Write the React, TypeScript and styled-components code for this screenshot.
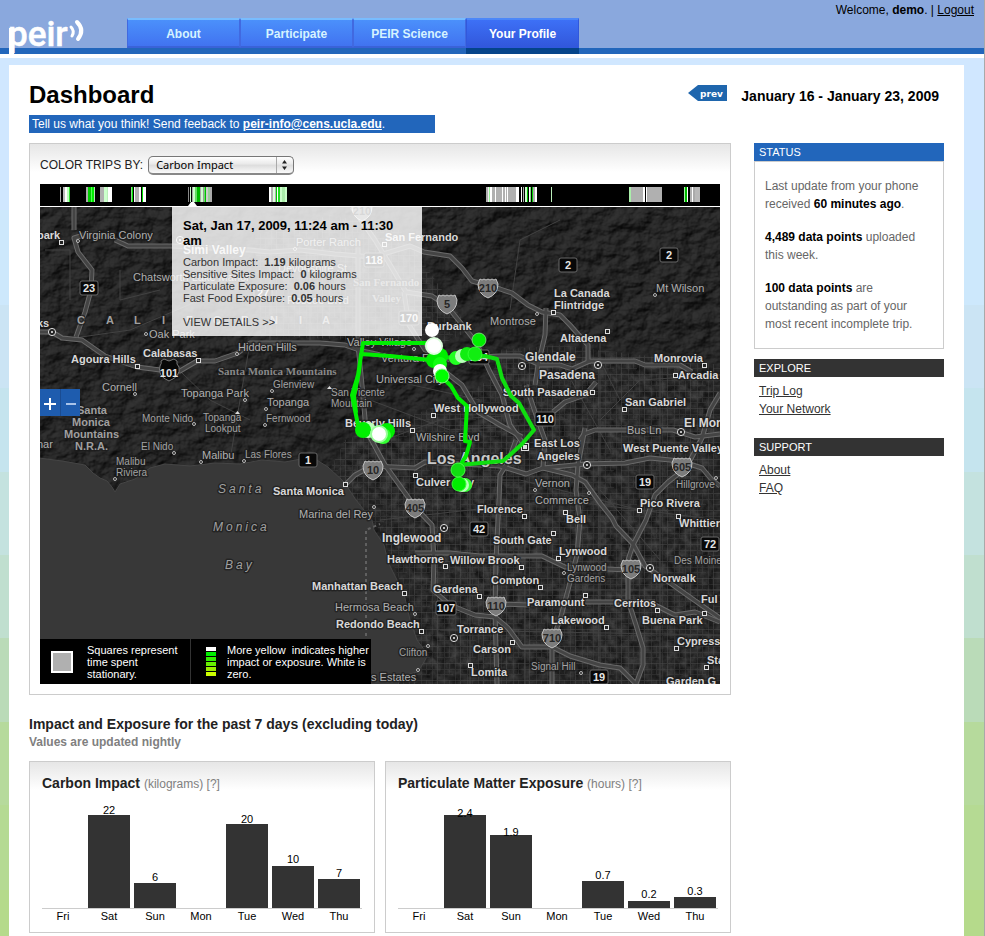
import React from "react";
import styled, { createGlobalStyle, css } from "styled-components";

const GlobalStyle = createGlobalStyle`
  * { box-sizing: border-box; }
  body {
    margin: 0;
    font-family: "Liberation Sans", Arial, sans-serif;
    font-size: 12px;
    line-height: 18px;
    color: #222;
  }
  h1, h2, h3, p, ul { margin: 0; padding: 0; }
  ul { list-style: none; }
`;

/* ---------- page frame ---------- */

const Page = styled.div`
  display: flex;
  flex-direction: column;
  min-height: 100vh;
  border-right: 1px solid #a9a9a9;
  background: linear-gradient(
    #d0e7ff 0 210px, #cde8fc 210px 305px, #cbe4f4 305px 388px, #c5e4ee 388px 472px,
    #c4e2df 472px 555px, #c0dfcf 555px 638px, #badbb8 638px 722px, #b6da9c 722px 805px,
    #b5da93 805px 890px, #b5da8b 890px
  );
`;

const Header = styled.header`
  display: flex;
  justify-content: space-between;
  height: 58px;
  padding-left: 9px;
  background: linear-gradient(#8aa8dd 0 48px, #2266bb 48px 54px, #fff 54px);
`;

const Brand = styled.div`
  display: flex;
  align-items: flex-start;
  gap: 38px;
  padding-top: 18px;
`;

const Logo = styled.a`
  display: block;
  width: 80px;
  height: 36px;
`;

const Nav = styled.nav`
  display: flex;
`;

const NavLink = styled.a<{ $active?: boolean }>`
  width: 113px;
  height: 30px;
  border: 1px solid #4169e0;
  border-top: 2px solid #78bcff;
  border-bottom: 2px solid #3a62d8;
  background: linear-gradient(#4b90fb, #4173f0);
  color: #d6f3ff;
  font-size: 12px;
  font-weight: bold;
  line-height: 28px;
  text-align: center;
  text-decoration: none;
  ${(p) =>
    p.$active &&
    css`
      border-color: #3158dc;
      border-top-color: #4c87f8;
      background: linear-gradient(#3d70f6, #3258dc);
      box-shadow: 0 6px 0 #04448a;
      color: #fff;
    `}
`;

const Welcome = styled.div`
  padding: 1px 10px 0 0;
  color: #000;
  a { color: #000; }
`;

const Content = styled.div`
  flex: 1;
  margin: 7px 20px 0 9px;
  padding: 16px 20px 3px;
  background: #fff;
`;

const TitleRow = styled.div`
  display: flex;
  justify-content: space-between;
  align-items: center;
  height: 28px;
`;

const Title = styled.h1`
  color: #000;
  font-size: 24px;
  line-height: 28px;
`;

const Period = styled.div`
  display: flex;
  align-items: flex-start;
  gap: 14px;
  padding: 2px 5px 0 0;
  color: #000;
  font-size: 14px;
  font-weight: bold;
`;

const PrevLink = styled.a`
  display: block;
  height: 16px;
  margin-top: -2px;
`;

const Feedback = styled.p`
  max-width: 406px;
  margin: 6px 0 10px;
  padding-left: 3px;
  background: #2266bb;
  color: #fff;
  a { color: #fff; font-weight: bold; }
`;

const Columns = styled.div`
  display: grid;
  grid-template-columns: minmax(0, 1fr) 190px;
  gap: 23px;
  align-items: start;
`;

const Panel = styled.section`
  border: 1px solid #ccc;
  background: linear-gradient(#e6e6e6, #fff 28px);
`;

/* ---------- map panel ---------- */

const MapPanel = styled(Panel)`
  padding: 11px 10px 10px;
`;

const ColorForm = styled.form`
  display: flex;
  align-items: center;
  gap: 5px;
  height: 20px;
  margin-bottom: 9px;
  label { font-size: 12px; color: #222; }
`;

const SelectBox = styled.span`
  position: relative;
  display: block;
  svg { position: absolute; right: 0; top: 0; pointer-events: none; }
`;

const Select = styled.select`
  appearance: none;
  display: block;
  width: 146px;
  height: 19px;
  padding: 0 20px 0 7px;
  border: 1px solid #777;
  border-bottom: 2px solid #888;
  border-radius: 5px;
  background: linear-gradient(#fff, #e9e9e9 45%, #dcdcdc 50%, #fafafa);
  color: #000;
  font-family: "Noto Sans", "Open Sans", sans-serif;
  font-size: 11px;
  line-height: 14px;
`;

const Timeline = styled.svg`
  display: block;
  width: 100%;
  height: 23px;
  background: #000;
  border-bottom: 1px solid #fff;
`;

const MapFrame = styled.div`
  position: relative;
  height: 477px;
  overflow: hidden;
  background: #383838;
`;

const MapSvg = styled.svg`
  display: block;
  width: 100%;
  height: 100%;
  font-family: "Liberation Sans", Arial, sans-serif;
`;

type Kind = "city" | "town" | "major" | "metro" | "range" | "park" | "water" | "small";

const kinds = {
  city: css`font-size: 11px; font-weight: bold; fill: #d8d8d8;`,
  town: css`font-size: 11px; fill: #b0b0b0;`,
  small: css`font-size: 10px; fill: #a2a2a2;`,
  major: css`font-size: 12px; font-weight: bold; fill: #d8d8d8;`,
  metro: css`font-size: 16px; font-weight: bold; fill: #c8c8c8;`,
  park: css`font-size: 11px; font-weight: bold; fill: #a0a0a0;`,
  range: css`font-size: 11px; font-weight: bold; fill: #888; font-family: "Liberation Serif", serif;`,
  water: css`font-size: 12px; font-style: italic; fill: #a0a0a0; letter-spacing: 3px;`,
};

const MapLabel = styled.text<{ $kind: Kind }>`
  ${(p) => kinds[p.$kind]}
  paint-order: stroke;
  stroke: #1c1c1c;
  stroke-opacity: 0.7;
  stroke-width: 3px;
  stroke-linejoin: round;
`;

const ShieldText = styled.text<{ $dark?: boolean }>`
  font-size: 11px;
  font-weight: bold;
  text-anchor: middle;
  fill: ${(p) => (p.$dark ? "#262626" : "#e4e4e4")};
`;

const Tooltip = styled.div`
  position: absolute;
  left: 132px;
  top: 0;
  width: 250px;
  height: 129px;
  padding: 11px;
  background: rgba(255, 255, 255, 0.82);
  color: #333;
  font-size: 11px;
  line-height: 12px;
  h3 {
    margin-bottom: 8px;
    color: #000;
    font-size: 13px;
    line-height: 15px;
  }
  a {
    display: inline-block;
    margin-top: 12px;
    color: #333;
    text-decoration: none;
  }
`;

const ZoomControl = styled.div`
  position: absolute;
  left: 0;
  top: 182px;
  display: flex;
`;

const ZoomButton = styled.button`
  display: flex;
  align-items: center;
  justify-content: center;
  width: 20px;
  height: 27px;
  padding: 3px 0 0;
  border: 0;
  background: #1e5cae;
  & + & { border-left: 1px solid #1a4c92; }
`;

const Legend = styled.div`
  position: absolute;
  left: 0;
  bottom: 0;
  display: flex;
  height: 45px;
  background: #000;
  color: #fff;
  font-size: 11px;
  line-height: 12px;
`;

const LegendItem = styled.div<{ $wide?: boolean }>`
  display: flex;
  align-items: center;
  gap: ${(p) => (p.$wide ? "11px" : "14px")};
  width: ${(p) => (p.$wide ? "181px" : "150px")};
  padding-left: ${(p) => (p.$wide ? "15px" : "11px")};
  border-left: ${(p) => (p.$wide ? "1px solid #333" : "0")};
  svg { flex: none; }
`;

/* ---------- charts ---------- */

const SectionTitle = styled.h2`
  margin-top: 20px;
  font-size: 14px;
  line-height: 18px;
`;

const SectionNote = styled.p`
  margin-bottom: 10px;
  color: #808080;
  font-weight: bold;
`;

const Charts = styled.div`
  display: grid;
  grid-template-columns: 1fr 1fr;
  gap: 10px;
`;

const ChartPanel = styled(Panel)`
  padding: 11px 12px 8px;
`;

const ChartTitle = styled.h3`
  font-size: 14px;
  line-height: 20px;
  small { color: #808080; font-size: 12px; font-weight: normal; }
  a { color: #808080; text-decoration: none; }
`;

const Plot = styled.div`
  display: grid;
  grid-template-columns: repeat(7, 1fr);
  column-gap: 4px;
  align-items: end;
  height: 115px;
  padding-right: 2px;
  border-bottom: 1px solid #ccc;
`;

const Bar = styled.div`
  position: relative;
  background: #333;
`;

const BarValue = styled.span`
  position: absolute;
  left: 0;
  right: 0;
  color: #000;
  font-size: 11px;
  line-height: 12px;
  text-align: center;
`;

const Days = styled.div`
  display: grid;
  grid-template-columns: repeat(7, 1fr);
  column-gap: 4px;
  padding-right: 2px;
  color: #000;
  font-size: 11px;
  line-height: 15px;
  text-align: center;
`;

/* ---------- sidebar ---------- */

const SideTitle = styled.h2<{ $blue?: boolean }>`
  padding-left: 5px;
  background: ${(p) => (p.$blue ? "#2266bb" : "#333")};
  color: #fff;
  font-size: 11px;
  font-weight: normal;
  line-height: 18px;
`;

const StatusBox = styled.div`
  display: grid;
  gap: 15px;
  margin-bottom: 10px;
  padding: 15px 10px;
  border: 1px solid #ccc;
  color: #666;
  strong { color: #000; }
`;

const SideLinks = styled.ul`
  padding: 5px 5px 20px;
  a { color: #333; }
`;

/* ---------- data ---------- */

const trips: [number, number, string][] = [
  [60, 1, "#aaa"], [63, 2, "#bbb"], [65, 2, "#fff"], [67, 2, "#bfb"], [69, 1, "#3d3"],
  [86, 2, "#aaa"], [88, 3, "#0c0"], [91, 1, "#5f5"], [92, 2, "#0e0"], [94, 1, "#bdb"],
  [100, 4, "#b0b0b0"], [104, 3, "#cfc"], [107, 1, "#beb"], [108, 4, "#fff"],
  [131, 1, "#8d8"], [132, 1, "#0d0"], [134, 1, "#fff"], [135, 4, "#b0b0b0"], [139, 2, "#fff"], [142, 1, "#0d0"], [143, 3, "#fff"],
  [188, 1, "#888"], [190, 1, "#cfc"], [192, 1, "#aaa"], [193, 2, "#cfc"], [195, 2, "#6d6"], [197, 3, "#0b0"], [200, 1, "#aaa"], [201, 2, "#cfc"], [203, 1, "#999"], [204, 1, "#6d6"], [205, 1, "#0b0"], [206, 2, "#ccc"], [208, 2, "#9c9"], [210, 2, "#aaa"],
  [269, 2, "#fff"], [271, 2, "#b0b0b0"], [273, 2, "#dfd"], [275, 1, "#b0b0b0"], [276, 1, "#0c0"], [277, 1, "#fff"], [278, 2, "#2d2"], [280, 2, "#cfc"], [282, 3, "#aea"], [285, 2, "#cfc"],
  [486, 2, "#b0b0b0"], [488, 1, "#eee"], [489, 1, "#9e9"], [490, 2, "#fff"], [492, 3, "#b0b0b0"], [495, 1, "#fff"], [496, 6, "#b0b0b0"], [502, 1, "#fff"], [503, 2, "#b0b0b0"], [505, 1, "#fff"], [506, 1, "#b0b0b0"], [507, 1, "#fff"], [508, 8, "#b0b0b0"], [516, 3, "#fff"], [521, 1, "#fff"], [523, 1, "#aaa"], [525, 2, "#cfc"], [527, 1, "#0b0"], [529, 1, "#fff"], [530, 1, "#8d8"], [532, 1, "#0c0"], [533, 2, "#aaa"], [535, 2, "#fff"],
  [551, 1, "#beb"],
  [629, 2, "#aea"], [631, 12, "#b0b0b0"], [643, 2, "#fff"], [646, 1, "#fff"], [647, 1, "#aaa"], [648, 14, "#b0b0b0"],
  [684, 1, "#aea"], [685, 2, "#0b0"], [687, 1, "#fff"], [690, 2, "#b0b0b0"], [692, 1, "#fff"], [693, 2, "#aaa"], [695, 5, "#b8b8b8"],
];

const roads = [
  "M74 207 V230 M84 235 L74 238 L78 252 L92 270 L91 290 L85 312 L76 337",
  "M40 332 H52 L62 338 L82 340 L105 356 L137 367 L168 371 H180 L197 361 H215 L238 353 L250 343 H290 L320 343 L345 345 L362 351 L390 357 L430 360 L462 385 L478 412 L500 425 L522 437",
  "M115 240 L128 246 H172 L250 250 L270 252 L300 250 L335 254 L373 257 L410 246 L424 252 L450 256 L462 268 L472 281 L500 289 L512 293 L528 305 L542 312 L560 315 L570 325 L577 333 L588 345 V361 L635 361 L645 365 H680 L692 372",
  "M352 207 L375 240 L392 268 L406 292 L432 296 L447 306 L460 322 L476 342 L490 372 L502 395 L510 425 L522 442",
  "M358 240 V345 L362 385 L366 430 L385 465 L408 497 L416 508 L432 525 L434 560 L433 590 L450 605 L475 615 L495 617 L508 628 L522 647 H552 L570 656 L600 665 L620 668 L636 684",
  "M345 485 L355 475 L372 466 L415 468 L425 462 L460 464 L500 466 L526 474 L543 468 L572 475 L585 482 L600 503 L612 518 L616 526 L633 544 L645 566 L670 583 L704 607 L720 618",
  "M543 468 L585 464 L625 463 L650 458 L680 461 L702 468 L712 480 L720 486",
  "M580 440 L584 434 L595 430 H673 L695 437 L720 434",
  "M478 357 L500 356 H520 L540 365 L560 365 L572 369 L590 361",
  "M546 308 L545 335 L538 365 L535 385",
  "M526 385 L536 415 L545 440 L543 468",
  "M553 412 L565 402 L585 395 L596 382",
  "M516 440 L508 462 L500 475 L499 500 L496 560 L495 612 L497 684",
  "M720 393 L710 410 L702 438 L686 468 L668 482 L655 495 L646 520 L633 545 L628 560 V600 L636 625 L643 648 V665 L636 684",
  "M585 428 L578 465 L576 490 L580 520 L577 555 L568 590 L560 620 L552 640 V684",
  "M496 604 L530 605 M585 602 H655 M655 605 L675 615 L695 612 L720 622",
  "M415 553 H450 L480 556 L520 556 H542 L565 567 L628 570",
  "M404 292 L409 325 L425 350 L450 360",
];

const minorRoads =
  "M370 400 L450 430 L530 425 M370 445 L440 420 L520 415 M380 520 L560 500 L720 520 M440 590 L720 590 M440 630 L720 635 M450 480 L520 480 L640 510 M600 340 V684 M660 360 V684 M470 450 V684 M525 480 V684 M560 360 L610 450 M600 490 L660 560 M600 420 L640 380 L720 375 M390 380 L480 400 M120 270 V300 L160 290 M45 250 H70 V300 M270 250 V340 M310 250 V340 M390 250 V340 M60 340 L130 330 L200 300 M180 371 L210 400 L250 420 M250 343 L240 400 L230 460 M510 310 L520 240 L560 220 M620 400 L600 360";

const urbanArea =
  "M345 440 L440 405 L490 380 L500 350 L560 345 L720 365 V684 H400 L415 620 L380 530 L330 470 Z M255 235 L330 215 L400 230 L470 330 L440 345 L260 335 Z";

const labels: [number, number, string, Kind][] = [
  [37, 239, "park", "city"], [79, 239, "Virginia Colony", "town"], [183, 254, "Simi Valley", "major"],
  [296, 246, "Porter Ranch", "town"], [385, 241, "San Fernando", "city"], [133, 281, "Chatsworth Lake Manor", "town"],
  [278, 272, "Devonshire St", "town"], [287, 304, "Roscoe Blvd", "town"], [353, 286, "San Fernando", "range"],
  [372, 302, "Valley", "range"], [554, 297, "La Canada", "city"], [554, 309, "Flintridge", "city"],
  [656, 292, "Mt Wilson", "town"], [490, 325, "Montrose", "town"], [560, 342, "Altadena", "city"],
  [149, 338, "Oak Park", "town"], [37, 327, "ks", "city"], [71, 363, "Agoura Hills", "city"],
  [143, 357, "Calabasas", "city"], [238, 351, "Hidden Hills", "town"], [218, 375, "Santa Monica Mountains", "range"],
  [427, 330, "Burbank", "city"], [347, 346, "Valley Village", "town"], [381, 362, "Ventura Fwy", "town"],
  [376, 383, "Universal City", "town"], [525, 361, "Glendale", "major"], [539, 379, "Pasadena", "major"],
  [503, 396, "South Pasadena", "city"], [654, 362, "Monrovia", "city"], [678, 379, "Arcadia", "city"],
  [625, 406, "San Gabriel", "city"], [684, 427, "El Monte", "major"], [627, 434, "Bus Ln", "town"],
  [102, 391, "Cornell", "town"], [181, 397, "Topanga Park", "town"], [273, 388, "Glenview", "small"],
  [331, 396, "San Vicente", "small"], [331, 407, "Mountain", "small"], [267, 406, "Topanga", "town"],
  [266, 422, "Fernwood", "small"], [142, 422, "Monte Nido", "small"], [203, 421, "Topanga", "small"],
  [205, 432, "Lookput", "small"], [77, 414, "Santa", "park"], [72, 426, "Monica", "park"],
  [64, 438, "Mountains", "park"], [75, 450, "N.R.A.", "park"], [141, 450, "El Nido", "small"],
  [37, 448, "nar", "town"], [116, 465, "Malibu", "small"], [116, 476, "Riviera", "small"],
  [202, 459, "Malibu", "town"], [245, 458, "Las Flores", "small"], [345, 427, "Beverly Hills", "city"],
  [434, 412, "West Hollywood", "city"], [416, 441, "Wilshire Blvd", "town"], [427, 464, "Los Angeles", "metro"],
  [534, 447, "East Los", "city"], [537, 460, "Angeles", "city"], [623, 452, "West Puente Valley", "city"],
  [416, 486, "Culver City", "city"], [273, 495, "Santa Monica", "city"], [299, 518, "Marina del Rey", "town"],
  [535, 487, "Vernon", "town"], [535, 504, "Commerce", "town"], [676, 488, "Hillgrove", "small"],
  [640, 507, "Pico Rivera", "city"], [477, 513, "Florence", "city"], [566, 523, "Bell", "city"],
  [679, 527, "Whittier", "city"], [382, 542, "Inglewood", "major"], [493, 544, "South Gate", "city"],
  [387, 563, "Hawthorne", "city"], [450, 564, "Willow Brook", "city"], [559, 555, "Lynwood", "city"],
  [567, 571, "Lynwood", "small"], [567, 582, "Gardens", "small"], [674, 564, "Des Moines", "small"],
  [491, 584, "Compton", "city"], [653, 582, "Norwalk", "city"], [312, 590, "Manhattan Beach", "city"],
  [433, 593, "Gardena", "city"], [527, 606, "Paramount", "city"], [614, 607, "Cerritos", "city"],
  [701, 603, "Ful", "city"], [335, 611, "Hermosa Beach", "town"], [336, 628, "Redondo Beach", "city"],
  [551, 624, "Lakewood", "city"], [642, 624, "Buena Park", "city"], [457, 633, "Torrance", "city"],
  [473, 653, "Carson", "city"], [399, 656, "Clifton", "small"], [677, 645, "Cypress", "city"],
  [531, 670, "Signal Hill", "small"], [707, 664, "Sta", "city"], [471, 676, "Lomita", "city"],
  [371, 681, "s Estates", "town"], [666, 685, "Garden G", "city"],
  [218, 493, "Santa", "water"], [213, 531, "Monica", "water"], [225, 569, "Bay", "water"],
  [77, 324, "C", "park"], [106, 324, "A", "park"], [134, 324, "L", "park"], [162, 324, "I", "park"],
  [186, 324, "F", "park"], [213, 324, "O", "park"], [241, 324, "R", "park"], [270, 324, "N", "park"],
  [299, 324, "I", "park"], [322, 324, "A", "park"],
];

const squares = [
  [61, 242], [137, 366], [198, 360], [384, 244], [553, 312], [607, 331], [704, 365], [675, 375], [592, 392], [624, 409],
  [433, 415], [412, 430], [415, 475], [345, 484], [524, 516], [565, 512], [639, 510], [678, 516], [553, 533], [521, 567],
  [445, 566], [558, 558], [540, 587], [404, 593], [479, 596], [585, 595], [657, 610], [606, 627], [704, 613], [421, 631],
  [512, 642], [470, 665], [676, 648], [706, 667],
];
const targets = [[52, 332], [180, 240], [522, 366], [598, 365], [681, 432], [587, 465], [444, 528], [650, 568], [454, 638]];
const dots = [
  [78, 241], [295, 249], [146, 334], [237, 354], [135, 394], [245, 400], [266, 409], [265, 425], [194, 424], [174, 453],
  [115, 479], [201, 462], [244, 461], [272, 391], [537, 314], [655, 295], [414, 349], [374, 507], [535, 490], [589, 493],
  [564, 573], [716, 478], [415, 614], [428, 646], [418, 670], [581, 673],
];
const interstates: [number, number, string][] = [
  [362, 211, "210"], [488, 288, "210"], [447, 304, "5"], [373, 470, "10"], [415, 508, "405"], [682, 467, "605"],
  [631, 569, "105"], [496, 606, "110"], [552, 638, "710"],
];
const routes: [number, number, string][] = [
  [89, 288, "23"], [568, 265, "2"], [669, 255, "2"], [374, 260, "118"], [409, 318, "170"], [263, 293, "27"],
  [545, 419, "110"], [308, 460, "1"], [645, 482, "19"], [479, 529, "42"], [710, 544, "72"], [446, 608, "107"],
  [599, 677, "19"], [479, 357, "134"],
];

const carbon = [
  { day: "Fri", value: "", height: 0, lift: 0 }, { day: "Sat", value: "22", height: 93, lift: -1 },
  { day: "Sun", value: "6", height: 25, lift: 0 }, { day: "Mon", value: "", height: 0, lift: 0 },
  { day: "Tue", value: "20", height: 84, lift: -1 }, { day: "Wed", value: "10", height: 42, lift: 1 },
  { day: "Thu", value: "7", height: 29, lift: 0 },
];
const particulate = [
  { day: "Fri", value: "", height: 0, lift: 0 }, { day: "Sat", value: "2.4", height: 93, lift: -4 },
  { day: "Sun", value: "1.9", height: 73, lift: -3 }, { day: "Mon", value: "", height: 0, lift: 0 },
  { day: "Tue", value: "0.7", height: 27, lift: 0 }, { day: "Wed", value: "0.2", height: 7, lift: 1 },
  { day: "Thu", value: "0.3", height: 11, lift: 0 },
];

/* ---------- pieces ---------- */

function PeirLogo() {
  return (
    <svg width="80" height="36" viewBox="0 0 80 36" overflow="visible" aria-label="peir">
      <text x="-1" y="28" fill="#fff" stroke="#fff" strokeWidth=".5" fontFamily="Roboto, sans-serif" fontWeight="500" fontSize="35">peir</text>
      <path d="M0 10h5v26H0z" fill="#fff" />
      <g fill="none" stroke="#fff" strokeLinecap="round">
        <path d="M62 9q4 4 1 9" strokeWidth="3" />
        <path d="M68 4Q76 12 69 21" strokeWidth="4" />
      </g>
    </svg>
  );
}

function TripMap() {
  return (
    <MapSvg viewBox="40 207 680 477" preserveAspectRatio="xMinYMin slice" aria-label="Map of trips around Los Angeles">
      <defs>
        <filter id="terrain" x="0" y="0" width="100%" height="100%" colorInterpolationFilters="sRGB">
          <feTurbulence type="fractalNoise" baseFrequency="0.05 0.07" numOctaves="5" seed="7" />
          <feDiffuseLighting surfaceScale="5" lightingColor="#fff" diffuseConstant="1">
            <feDistantLight azimuth="225" elevation="45" />
          </feDiffuseLighting>
          <feColorMatrix values="0.17 0 0 0 0.03  0.17 0 0 0 0.03  0.17 0 0 0 0.03  0 0 0 0 1" />
        </filter>
        <filter id="grain" x="0" y="0" width="100%" height="100%" colorInterpolationFilters="sRGB">
          <feGaussianBlur in="SourceGraphic" stdDeviation="9" result="soft" />
          <feTurbulence type="fractalNoise" baseFrequency="0.12" numOctaves="4" seed="3" />
          <feColorMatrix values="0.26 0 0 0 0.03  0.26 0 0 0 0.03  0.26 0 0 0 0.03  0 0 0 0 1" />
          <feComposite in2="soft" operator="in" />
        </filter>
        <pattern id="streets" width="23" height="17" patternUnits="userSpaceOnUse">
          <path d="M0 .5H23M.5 0V17" stroke="#555" opacity=".4" />
          <path d="M0 6.500H23M0 11.500H16M7.500 0V17M12.500 0V11M18.500 0V17" stroke="#484848" opacity=".35" />
        </pattern>
      </defs>
      <rect x="40" y="207" width="680" height="477" filter="url(#terrain)" />
      <path filter="url(#grain)" fill="#2c2c2c" d={urbanArea} />
      <path fill="url(#streets)" d={urbanArea} />
      <path
        fill="#383838" stroke="#454545"
        d="M39 458 L62 461 L85 465 L93 473 L100 478 L107 481 L112 487 L115 492 L120 484 L135 479 L150 468 L165 464 L190 466 L215 463 L240 464 L262 460 L285 462 L312 457 L328 467 L344 482 L356 500 L372 520 L374 530 L384 545 L388 562 L398 582 L405 598 L410 620 L417 640 L428 655 L418 672 L400 676 L398 686 L39 686 Z"
      />
      <path d="M366 642 V530 L380 524" fill="none" stroke="#606060" strokeWidth="2" strokeDasharray="3 3" />
      <path d={minorRoads} fill="none" stroke="#424242" />
      <g fill="none" strokeLinejoin="round">
        {roads.map((d) => <path key={d} d={d} stroke="#6a6a6a" strokeWidth="5" />)}
        {roads.map((d) => <path key={d} d={d} stroke="#444" strokeWidth="3" />)}
      </g>
      {routes.map(([x, y, n]) => (
        <g key={`${x}-${y}`}>
          <rect x={x - (n.length > 2 ? 10 : 9)} y={y - 7} width={n.length > 2 ? 20 : 18} height="14" rx="2" fill="#080808" stroke="#666" />
          <ShieldText x={x} y={y + 4}>{n}</ShieldText>
        </g>
      ))}
      <path d="M160 366q2-3 1-5l3-2 5 2 5-2 3 2q-1 3 2 6 2 9-10 14-12-5-9-15z" fill="#080808" stroke="#777" />
      <ShieldText x="169" y="377">101</ShieldText>
      {interstates.map(([x, y, n]) => (
        <g key={`${x}-${y}`}>
          <path
            transform={`translate(${x} ${y})`}
            d="M-8-9 Q-6-7-4-9 Q-2-7 0-9 Q2-7 4-9 Q6-7 8-9 L10-4 Q10 6 0 10 Q-10 6-10-4 Z"
            fill="#7c7c7c" stroke="#c4c4c4"
          />
          <ShieldText $dark x={x} y={y + 4}>{n}</ShieldText>
        </g>
      ))}
      {labels.map(([x, y, t, k]) => <MapLabel key={`${t}-${x}-${y}`} x={x} y={y} $kind={k}>{t}</MapLabel>)}
      <g fill="#222" stroke="#ddd">
        {squares.map(([x, y]) => <rect key={`${x}-${y}`} x={x - 1.5} y={y - 1.5} width="4" height="4" />)}
        {dots.map(([x, y]) => <circle key={`${x}-${y}`} cx={x} cy={y} r="1.5" strokeWidth=".8" />)}
        {targets.map(([x, y]) => (
          <g key={`${x}-${y}`}>
            <circle cx={x} cy={y} r="3.6" />
            <circle cx={x} cy={y} r=".7" fill="#ddd" />
          </g>
        ))}
        <rect x="521.5" y="443.500" width="7" height="7" />
        <rect x="523.5" y="445.500" width="3" height="3" fill="#ddd" />
      </g>
      <path d="M235 414l2.500-3 2.500 3zM327 389l2.500-3 2.500 3z" fill="#ddd" />
      <g fill="none" stroke="#00ee00" strokeWidth="4" strokeLinejoin="round" strokeLinecap="round">
        <path d="M430 343H363L358 375 352 395 356 415 359 430M430 360L390 356 361 354 359 372 354 396 356 412" />
        <path d="M440 358L455 357 485 356 497 359 502 378 511 396 519 403 534 430 522 444 511 454 503 461 459 465" stroke="#10dd10" />
        <path d="M441 376L451 386 458 398 467 406 465 441 470 442 466 456 459 467" />
      </g>
      <g>
        <circle cx="387" cy="431" r="8" fill="#0e0" /><circle cx="383" cy="436" r="8" fill="#3f3" />
        <circle cx="368" cy="430" r="8" fill="#bfb" /><circle cx="363" cy="430" r="8" fill="#0e0" />
        <circle cx="379" cy="434" r="8" fill="#fff" stroke="#9f9" strokeWidth="2" />
        <circle cx="479" cy="340" r="7" fill="#0e0" stroke="#9e9" strokeWidth=".7" />
        <circle cx="456" cy="358" r="7" fill="#2f2" /><circle cx="462" cy="356" r="7" fill="#bfb" />
        <circle cx="467" cy="354" r="7" fill="#1e1" /><circle cx="475" cy="354" r="7" fill="#1e1" stroke="#3f3" />
        <circle cx="434" cy="360" r="8" fill="#0e0" /><circle cx="440" cy="356" r="8" fill="#0e0" />
        <circle cx="440" cy="364" r="7" fill="#1f1" /><circle cx="440" cy="371" r="7" fill="#fff" />
        <circle cx="442" cy="376" r="7" fill="#0f0" stroke="#8f8" />
        <circle cx="432" cy="330" r="7" fill="#fff" /><circle cx="434" cy="346" r="8" fill="#fff" stroke="#dfd" strokeWidth="2" />
        <circle cx="465" cy="485" r="7" fill="#3f3" /><circle cx="462" cy="485" r="7" fill="#bfb" />
        <circle cx="459" cy="484" r="7" fill="#0e0" stroke="#3f3" /><circle cx="458" cy="470" r="7" fill="#1d1" stroke="#4f4" />
      </g>
    </MapSvg>
  );
}

function Chart({ title, unit, data }: { title: string; unit: string; data: typeof carbon }) {
  return (
    <ChartPanel>
      <ChartTitle>{title} <small>({unit}) <a href="#help">[?]</a></small></ChartTitle>
      <Plot>
        {data.map((d) => (
          <Bar key={d.day} style={{ height: d.height }}>
            {d.value && <BarValue style={{ bottom: d.height + d.lift }}>{d.value}</BarValue>}
          </Bar>
        ))}
      </Plot>
      <Days>{data.map((d) => <span key={d.day}>{d.day}</span>)}</Days>
    </ChartPanel>
  );
}

export default function App() {
  return (
    <Page>
      <GlobalStyle />
      <Header>
        <Brand>
          <Logo href="#home"><PeirLogo /></Logo>
          <Nav>
            <NavLink href="#about">About</NavLink>
            <NavLink href="#participate">Participate</NavLink>
            <NavLink href="#science">PEIR Science</NavLink>
            <NavLink href="#profile" $active>Your Profile</NavLink>
          </Nav>
        </Brand>
        <Welcome>Welcome, <strong>demo</strong>. | <a href="#logout">Logout</a></Welcome>
      </Header>
      <Content>
        <TitleRow>
          <Title>Dashboard</Title>
          <Period>
            <PrevLink href="#prev">
              <svg width="39" height="16" viewBox="0 0 39 16">
                <path d="M0 8L10 0H39V16H10Z" fill="#1f66ad" />
                <text x="12" y="12" fill="#fff" fontFamily="DejaVu Sans, sans-serif" fontWeight="bold" fontSize="9">prev</text>
              </svg>
            </PrevLink>
            <span>January 16 - January 23, 2009</span>
          </Period>
        </TitleRow>
        <Feedback>Tell us what you think! Send feeback to <a href="mailto:peir-info@cens.ucla.edu">peir-info@cens.ucla.edu</a>.</Feedback>
        <Columns>
          <main>
            <MapPanel>
              <ColorForm>
                <label htmlFor="color-by">COLOR TRIPS BY:</label>
                <SelectBox>
                  <Select id="color-by" defaultValue="carbon">
                    <option value="carbon">Carbon Impact</option>
                    <option value="particulate">Particulate Exposure</option>
                  </Select>
                  <svg width="19" height="19" viewBox="0 0 19 19">
                    <path d="M1.500 1V17" stroke="#aaa" />
                    <path d="M7 7.500L9.500 4 12 7.500ZM7 10.500L9.500 14 12 10.500Z" fill="#222" />
                  </svg>
                </SelectBox>
              </ColorForm>
              <Timeline viewBox="40 184 680 22" preserveAspectRatio="xMinYMin slice">
                {trips.map(([x, w, c]) => <rect key={x} x={x} y="187" width={w} height="15" fill={c} />)}
                <path d="M188 206L191 202H194L197 206Z" fill="#fff" />
              </Timeline>
              <MapFrame>
                <TripMap />
                <Tooltip>
                  <h3>Sat, Jan 17, 2009, 11:24 am - 11:30 am</h3>
                  <p>Carbon Impact: &nbsp;<strong>1.19</strong> kilograms</p>
                  <p>Sensitive Sites Impact: &nbsp;<strong>0</strong> kilograms</p>
                  <p>Particulate Exposure: &nbsp;<strong>0.06</strong> hours</p>
                  <p>Fast Food Exposure: &nbsp;<strong>0.05</strong> hours</p>
                  <a href="#details">VIEW DETAILS &gt;&gt;</a>
                </Tooltip>
                <ZoomControl>
                  <ZoomButton type="button" aria-label="Zoom in">
                    <svg width="12" height="12"><path d="M6 0V12M0 6H12" stroke="#fff" strokeWidth="2" /></svg>
                  </ZoomButton>
                  <ZoomButton type="button" aria-label="Zoom out">
                    <svg width="12" height="12"><path d="M1 6H11" stroke="#a9c4ea" strokeWidth="2" /></svg>
                  </ZoomButton>
                </ZoomControl>
                <Legend>
                  <LegendItem>
                    <svg width="22" height="22"><rect x="1" y="1" width="20" height="20" fill="#b0b0b0" stroke="#fff" strokeWidth="2" /></svg>
                    <span>Squares represent time spent stationary.</span>
                  </LegendItem>
                  <LegendItem $wide>
                    <svg width="10" height="30">
                      {["#fff", "#00ee00", "#33ee00", "#66ee00", "#99ee00", "#ccff00"].map((c, i) => (
                        <rect key={c} y={i * 5} width="10" height="4" fill={c} />
                      ))}
                    </svg>
                    <span>More yellow &nbsp;indicates higher impact or exposure. White is zero.</span>
                  </LegendItem>
                </Legend>
              </MapFrame>
            </MapPanel>
            <SectionTitle>Impact and Exposure for the past 7 days (excluding today)</SectionTitle>
            <SectionNote>Values are updated nightly</SectionNote>
            <Charts>
              <Chart title="Carbon Impact" unit="kilograms" data={carbon} />
              <Chart title="Particulate Matter Exposure" unit="hours" data={particulate} />
            </Charts>
          </main>
          <aside>
            <SideTitle $blue>STATUS</SideTitle>
            <StatusBox>
              <p>Last update from your phone received <strong>60 minutes ago</strong>.</p>
              <p><strong>4,489 data points</strong> uploaded this week.</p>
              <p><strong>100 data points</strong> are outstanding as part of your most recent incomplete trip.</p>
            </StatusBox>
            <SideTitle>EXPLORE</SideTitle>
            <SideLinks>
              <li><a href="#trips">Trip Log</a></li>
              <li><a href="#network">Your Network</a></li>
            </SideLinks>
            <SideTitle>SUPPORT</SideTitle>
            <SideLinks>
              <li><a href="#about-us">About</a></li>
              <li><a href="#faq">FAQ</a></li>
            </SideLinks>
          </aside>
        </Columns>
      </Content>
    </Page>
  );
}
